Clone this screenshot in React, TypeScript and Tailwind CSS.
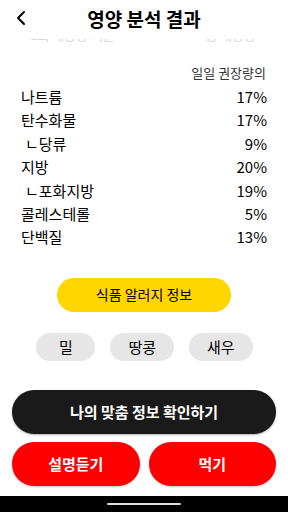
import { ChevronLeft } from 'lucide-react';

const rows = [
  { name: '나트륨', value: '17%' },
  { name: '탄수화물', value: '17%' },
  { name: 'ㄴ당류', value: '9%', sub: true },
  { name: '지방', value: '20%' },
  { name: 'ㄴ포화지방', value: '19%', sub: true },
  { name: '콜레스테롤', value: '5%' },
  { name: '단백질', value: '13%' },
];

const allergens = ['밀', '땅콩', '새우'];

export default function App() {
  return (
    <div
      className="w-[288px] h-[512px] bg-white flex flex-col overflow-hidden"
      style={{ fontFamily: '"Noto Sans CJK KR", "Noto Sans", sans-serif' }}
    >
      <header className="h-[36px] flex items-center relative shrink-0">
        <ChevronLeft size={24} strokeWidth={2} className="ml-[9px] text-black" />
        <h1 className="absolute left-0 right-0 text-center text-[19px] font-bold text-black leading-none">
          영양 분석 결과
        </h1>
      </header>

      {/* scrolled content peeking under the header */}
      <div className="h-[4px] mt-[3px] overflow-hidden shrink-0">
        <div className="-mt-[12px] flex justify-between pl-[30px] pr-[32px] text-[13px] text-gray-300 leading-[16px]">
          <span>1회 제공량 기준</span>
          <span>총 내용량</span>
        </div>
      </div>

      <section className="flex-1 px-[21px] pt-[20px]">
        <p className="text-right text-[13px] text-[#333] leading-[20px] pr-[1px]">일일 권장량의</p>
        <ul className="mt-[2px]">
          {rows.map((r) => (
            <li key={r.name} className="flex justify-between text-[15px] text-black leading-[23.4px]">
              <span className={r.sub ? 'pl-[4px]' : ''}>{r.name}</span>
              <span>{r.value}</span>
            </li>
          ))}
        </ul>

        <div className="flex justify-center mt-[29px]">
          <button className="w-[174px] h-[34px] rounded-full bg-[#ffd600] text-[14px] text-black">
            식품 알러지 정보
          </button>
        </div>

        <div className="flex justify-center gap-[15px] mt-[21px] pl-[1px]">
          {allergens.map((a) => (
            <span
              key={a}
              className="h-[28px] min-w-[59px] px-[18px] rounded-full bg-[#e6e6e6] text-[15px] text-black flex items-center justify-center"
            >
              {a}
            </span>
          ))}
        </div>
      </section>

      <div className="px-[12px] flex flex-col gap-[8px] pb-[10px] shrink-0">
        <button className="h-[44px] rounded-[22px] bg-[#1a1a1a] text-white text-[15px] font-bold shadow-[0_1px_2px_rgba(0,0,0,0.3)]">
          나의 맞춤 정보 확인하기
        </button>
        <div className="flex gap-[9px]">
          <button className="flex-1 h-[44px] rounded-[22px] bg-[#ff0000] text-white text-[15px] font-bold shadow-[0_1px_2px_rgba(0,0,0,0.25)]">
            설명듣기
          </button>
          <button className="flex-1 h-[44px] rounded-[22px] bg-[#ff0000] text-white text-[15px] font-bold shadow-[0_1px_2px_rgba(0,0,0,0.25)]">
            먹기
          </button>
        </div>
      </div>

      <div className="h-[16px] bg-black flex justify-center items-center shrink-0">
        <div className="w-[74px] h-[2px] rounded-full bg-[#dddddd]" />
      </div>
    </div>
  );
}
